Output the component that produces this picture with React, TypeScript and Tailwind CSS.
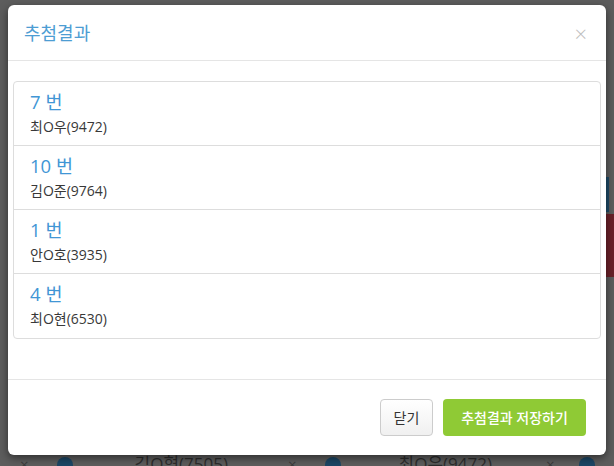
const results = [
  { no: 7, name: "최O우(9472)" },
  { no: 10, name: "김O준(9764)" },
  { no: 1, name: "안O호(3935)" },
  { no: 4, name: "최O현(6530)" },
];

const font = { fontFamily: '"Open Sans", "Noto Sans CJK KR", sans-serif' };

export default function App(): JSX.Element {
  return (
    <div className="relative w-[614px] h-[466px] overflow-hidden bg-[#5d5d5d]" style={font}>
      {/* page behind the backdrop */}
      <div className="absolute right-[5px] top-[177px] w-[3px] h-[35px] bg-[#1e4a66]" />
      <div className="absolute right-0 top-[214px] w-[8px] h-[63px] bg-[#6b2129]" />
      <div className="absolute left-0 top-[455px] w-full flex items-start text-[15px] text-[#2d2d2d]">
        <span className="ml-[20px] mt-[-2px] text-[#3b3b3b]">×</span>
        <span className="ml-[28px] mt-[2px] w-[16px] h-[16px] rounded-full bg-[#1c4766]" />
        <span className="ml-[62px] mt-[-4px] text-[17px]">김O형(7505)</span>
        <span className="ml-[60px] mt-[-2px] text-[#3b3b3b]">×</span>
        <span className="ml-[28px] mt-[2px] w-[16px] h-[16px] rounded-full bg-[#1c4766]" />
        <span className="ml-[58px] mt-[-4px] text-[17px]">최O우(9472)</span>
        <span className="ml-[54px] mt-[-2px] text-[#3b3b3b]">×</span>
        <span className="ml-[24px] mt-[2px] w-[16px] h-[16px] rounded-full bg-[#1c4766]" />
      </div>

      {/* modal */}
      <div className="relative ml-[8px] mt-[5px] w-[598px] h-[450px] bg-white rounded-[6px] shadow-[0_3px_9px_rgba(0,0,0,0.5)] flex flex-col">
        <div className="h-[56px] flex items-center justify-between px-[16px] border-b border-[#e5e5e5]">
          <h4 className="text-[18px] text-[#4d9dd3] leading-none">추첨결과</h4>
          <button className="text-[22px] text-[#bdbdbd] leading-none mr-[3px] font-light">×</button>
        </div>

        <div className="px-[5px] pt-[20px] pb-[40px]">
          <ul className="border border-[#dddddd] rounded-[4px]">
            {results.map((r, i) => (
              <li
                key={r.no}
                className={`h-[64px] px-[16px] pt-[7px] ${i < results.length - 1 ? "border-b border-[#dddddd]" : "h-[63px]"}`}
              >
                <div className="text-[18.5px] leading-[26px] text-[#4196d5]">{r.no} 번</div>
                <div className="text-[14px] leading-[20px] mt-[2px] text-[#383838]">{r.name}</div>
              </li>
            ))}
          </ul>
        </div>

        <div className="mt-auto h-[76px] border-t border-[#e5e5e5] flex items-center justify-end gap-[10px] px-[20px]">
          <button className="w-[53px] h-[37px] rounded-[4px] border border-[#cccccc] bg-gradient-to-b from-white to-[#f0f0f0] text-[14px] text-[#333333]">
            닫기
          </button>
          <button className="w-[143px] h-[37px] rounded-[4px] bg-[#8fca35] text-[14px] text-white font-medium">
            추첨결과 저장하기
          </button>
        </div>
      </div>
    </div>
  );
}
